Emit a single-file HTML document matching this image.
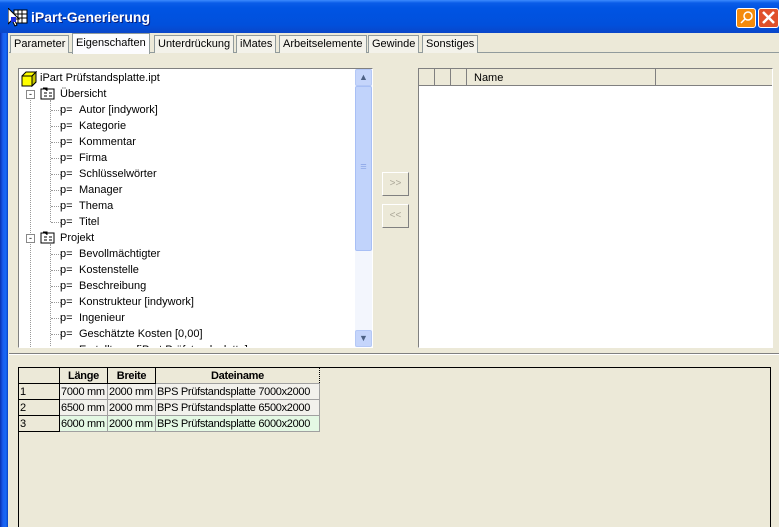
<!DOCTYPE html>
<html><head><meta charset="utf-8"><style>
*{box-sizing:border-box;margin:0;padding:0}
html,body{width:779px;height:527px;overflow:hidden}
body{background:#ece9d8;font:11px "Liberation Sans",sans-serif;color:#000;position:relative}
.abs{position:absolute}
.title{left:0;top:0;width:779px;height:33px;background:linear-gradient(#3d8bfd 0,#0a5ce8 3px,#0054e3 8px,#0150dc 25px,#0a46c8 33px)}
.title span{position:absolute;left:31px;top:9px;color:#fff;font-weight:bold;font-size:14px;text-shadow:1px 1px #0a1e7a}
.lb{left:0;top:33px;width:8px;height:494px;background:linear-gradient(90deg,#0831b0,#1a5ef0 3px,#166af5 6px,#0a3fbf)}
.tab{position:absolute;top:35px;height:18px;border:1px solid #919b9c;border-bottom:none;background:#f3f2ea;padding:2px 3px 0;white-space:nowrap}
.tab.sel{top:33px;height:21px;background:#fcfcfe;border-color:#919b9c;z-index:2}
.box{position:absolute;background:#fff;border:1px solid #7f9db9}
.row{position:absolute;height:16px;line-height:16px;white-space:nowrap}
.dot{position:absolute;border-left:1px dotted #999}
.hd{position:absolute;border-top:1px dotted #999;width:10px}
.btn{position:absolute;left:382px;width:27px;height:24px;border:1px solid;border-color:#fff #808080 #808080 #fff;background:#ece9d8;color:#aca899;text-align:center;line-height:22px;font-size:10px}
table{border-collapse:collapse;position:absolute;left:18px;top:367px;table-layout:fixed;width:301px}
td{height:16px;border:1px solid #a0a0a0;padding:0 1px;white-space:nowrap;background:#f2f1ec;overflow:hidden;letter-spacing:-0.3px}
</style></head><body>
<div class="abs title"><span>iPart-Generierung</span>
<svg class="abs" style="left:8px;top:8px" width="22" height="20"><rect x="6" y="2" width="13" height="13" fill="#fff" stroke="#000"/><path d="M6 6h13M6 10h13M10 2v13M14 2v13" stroke="#000"/><path d="M0 0v16l4-4 3 6 2-1-3-6h5z" fill="#fff" stroke="#000"/><rect x="3" y="9" width="5" height="5" fill="#2030e0"/></svg>
<div class="abs" style="left:736px;top:8px;width:20px;height:20px;border:1px solid #fff;border-radius:3px;background:#f48a0c"><svg width="18" height="18"><circle cx="11" cy="7" r="4" fill="none" stroke="#fff" stroke-width="1.5"/><path d="M8 10l-4 4" stroke="#fff" stroke-width="1.5"/></svg></div>
<div class="abs" style="left:758px;top:8px;width:21px;height:20px;border:1px solid #fff;border-radius:3px;background:#e0502a"><svg width="19" height="18"><path d="M4 3l11 11M15 3L4 14" stroke="#fff" stroke-width="2.5"/></svg></div>
</div>
<div class="abs lb"></div>
<div class="abs" style="left:9px;top:52px;width:770px;height:1px;background:#919b9c"></div>
<div class="tab" style="left:10px">Parameter</div>
<div class="tab sel" style="left:72px;padding-top:3px">Eigenschaften</div>
<div class="tab" style="left:154px">Unterdrückung</div>
<div class="tab" style="left:236px">iMates</div>
<div class="tab" style="left:279px">Arbeitselemente</div>
<div class="tab" style="left:368px">Gewinde</div>
<div class="tab" style="left:422px">Sonstiges</div>

<div class="box" style="left:18px;top:68px;width:355px;height:280px;overflow:hidden;border-color:#808080 #fff #fff #808080">
 <svg class="abs" style="left:2px;top:2px" width="16" height="16"><path d="M1 5h10v10H1zM1 5l4-4h10l-4 4M11 15l4-4V1" fill="#ffff00" stroke="#000"/><path d="M11 5l4-4v10l-4 4z" fill="#c8c800" stroke="#000"/></svg>
 <div class="row" style="left:21px;top:1px">iPart Prüfstandsplatte.ipt</div>
 <div class="dot" style="left:11px;top:22px;height:256px"></div>
 <div class="dot" style="left:31px;top:31px;height:122px"></div>
 <div class="dot" style="left:31px;top:175px;height:110px"></div>
 <div class="abs" style="left:7px;top:21px;width:9px;height:9px;border:1px solid #888;background:#fff;font-size:9px;line-height:6px;text-align:center">-</div>
 <svg class="abs" style="left:21px;top:18px" width="16" height="14"><rect x="1" y="2" width="13" height="10" fill="#fff" stroke="#000"/><path d="M3 1h4v3M4 6h3M4 9h3M9 6h3M9 9h3" stroke="#000"/></svg>
 <div class="row" style="left:41px;top:17px">Übersicht</div>
 <div class="abs" style="left:7px;top:165px;width:9px;height:9px;border:1px solid #888;background:#fff;font-size:9px;line-height:6px;text-align:center">-</div>
 <svg class="abs" style="left:21px;top:162px" width="16" height="14"><rect x="1" y="2" width="13" height="10" fill="#fff" stroke="#000"/><path d="M3 1h4v3M4 6h3M4 9h3M9 6h3M9 9h3" stroke="#000"/></svg>
 <div class="row" style="left:41px;top:161px">Projekt</div>
 <div id="items"></div>
 <div class="abs" style="left:336px;top:0;width:17px;height:278px;background:#f3f6fd">
  <div class="abs" style="left:0;top:0;width:17px;height:17px;background:#c5d5fb;border:1px solid #b4c8f6;border-radius:2px;color:#4d6185;text-align:center;font-size:9px;line-height:15px">&#9650;</div>
  <div class="abs" style="left:0;top:17px;width:17px;height:165px;background:#c1d3fb;border:1px solid #a8bff5;border-radius:2px;color:#8fa8e8;text-align:center;line-height:160px">≡</div>
  <div class="abs" style="left:0;top:261px;width:17px;height:17px;background:#c5d5fb;border:1px solid #b4c8f6;border-radius:2px;color:#4d6185;text-align:center;font-size:9px;line-height:15px">&#9660;</div>
 </div>
</div>
<div class="btn" style="top:172px">&gt;&gt;</div>
<div class="btn" style="top:204px">&lt;&lt;</div>
<div class="box" style="left:418px;top:68px;width:355px;height:280px;border-color:#808080 #fff #fff #808080">
 <div class="abs" style="left:0;top:0;width:353px;height:17px;background:#ece9d8;border-bottom:1px solid #808080"></div>
 <div class="abs" style="left:15px;top:0;width:1px;height:17px;background:#808080"></div>
 <div class="abs" style="left:31px;top:0;width:1px;height:17px;background:#808080"></div>
 <div class="abs" style="left:47px;top:0;width:1px;height:17px;background:#808080"></div>
 <div class="abs" style="left:236px;top:0;width:1px;height:17px;background:#808080"></div>
 <div class="row" style="left:55px;top:1px">Name</div>
</div>
<div class="abs" style="left:9px;top:353px;width:770px;height:1px;background:#808080"></div>
<div class="abs" style="left:9px;top:354px;width:770px;height:1px;background:#fff"></div>
<div class="abs" style="left:18px;top:367px;width:753px;height:165px;border:1px solid #000"></div>
<table>
<colgroup><col style="width:41px"><col style="width:48px"><col style="width:48px"><col style="width:164px"></colgroup>
<tr><td style="background:#ece9d8;border-color:#000"></td><td style="text-align:center;font-weight:bold;background:#ece9d8;border-color:#000">Länge</td><td style="text-align:center;font-weight:bold;background:#ece9d8;border-color:#000">Breite</td><td style="text-align:center;font-weight:bold;background:#ece9d8;border:1px dotted #000">Dateiname</td></tr>
<tr><td style="background:#ece9d8;border-color:#000">1</td><td>7000 mm</td><td>2000 mm</td><td>BPS Prüfstandsplatte 7000x2000</td></tr>
<tr><td style="background:#ece9d8;border-color:#000">2</td><td>6500 mm</td><td>2000 mm</td><td>BPS Prüfstandsplatte 6500x2000</td></tr>
<tr><td style="background:#ece9d8;border-color:#000">3</td><td style="background:#e4f8e4">6000 mm</td><td style="background:#e4f8e4">2000 mm</td><td style="background:#e4f8e4">BPS Prüfstandsplatte 6000x2000</td></tr>
</table>
<script>
var a=["Autor [indywork]","Kategorie","Kommentar","Firma","Schlüsselwörter","Manager","Thema","Titel",null,"Bevollmächtigter","Kostenstelle","Beschreibung","Konstrukteur [indywork]","Ingenieur","Geschätzte Kosten [0,00]","Erstellt von [iPart Prüfstandsplatte]"];
var h="";a.forEach(function(t,i){if(t===null)return;var y=33+i*16;
h+='<div class="hd" style="left:32px;top:'+(y+8)+'px"></div><div class="row" style="left:41px;top:'+y+'px">p=</div><div class="row" style="left:60px;top:'+y+'px">'+t+'</div>';});
document.getElementById("items").innerHTML=h;
</script>
</body></html>
